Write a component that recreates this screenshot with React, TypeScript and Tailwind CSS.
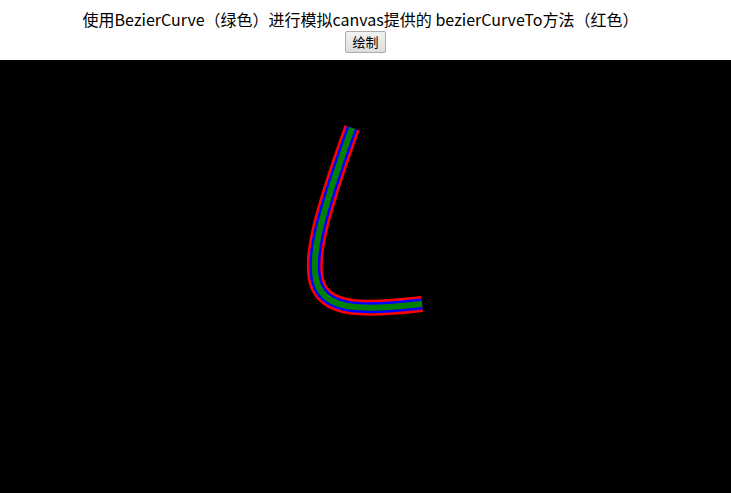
import React from "react";

export default function App() {
  const d = "M352 68 C 290 240, 300 258, 422 244";
  return (
    <div className="w-[731px] h-[493px] bg-white flex flex-col overflow-hidden">
      <div className="h-[60px] flex flex-col items-center pt-[8px] text-[16px] leading-[22px] text-black" style={{ fontFamily: '"Noto Sans CJK SC", "Microsoft YaHei", sans-serif' }}>
        <div className="pr-[10px]">使用BezierCurve（绿色）进行模拟canvas提供的 bezierCurveTo方法（红色）</div>
        <button className="mt-[1px] h-[22px] px-[6px] text-[13px] leading-[18px] border border-[#adadad] rounded-[2px] bg-gradient-to-b from-[#f2f2f2] to-[#dddddd] text-black">绘制</button>
      </div>
      <div className="flex-1 bg-black">
        <svg width="731" height="433" viewBox="0 0 731 433">
          <path d={d} fill="none" stroke="#ff0000" strokeWidth={16} />
          <path d={d} fill="none" stroke="#0000ff" strokeWidth={11} />
          <path d={d} fill="none" stroke="#008000" strokeWidth={6} />
        </svg>
      </div>
    </div>
  );
}
